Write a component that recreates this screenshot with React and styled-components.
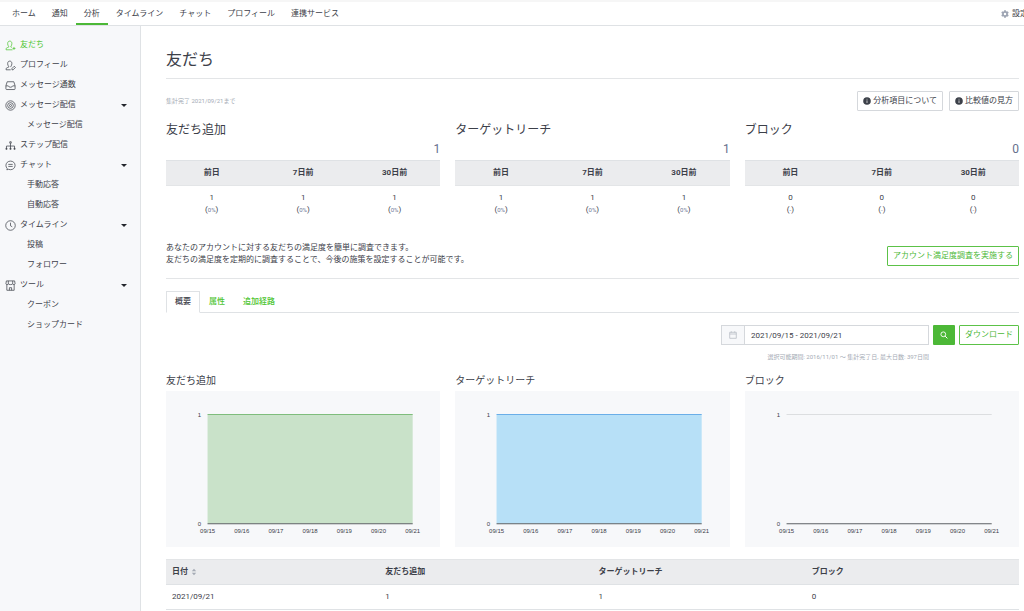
import styled, { createGlobalStyle } from "styled-components";

const navItems = [
  "ホーム",
  "通知",
  "分析",
  "タイムライン",
  "チャット",
  "プロフィール",
  "連携サービス",
];

const menuItems = [
  { label: "友だち", icon: "friends", active: true },
  { label: "プロフィール", icon: "profile" },
  { label: "メッセージ通数", icon: "inbox" },
  { label: "メッセージ配信", icon: "broadcast", children: ["メッセージ配信"] },
  { label: "ステップ配信", icon: "steps" },
  { label: "チャット", icon: "chat", children: ["手動応答", "自動応答"] },
  { label: "タイムライン", icon: "clock", children: ["投稿", "フォロワー"] },
  { label: "ツール", icon: "shop", children: ["クーポン", "ショップカード"] },
];

const periods = ["前日", "7日前", "30日前"];

const stats = [
  { title: "友だち追加", total: 1, value: 1, rate: "0%" },
  { title: "ターゲットリーチ", total: 1, value: 1, rate: "0%" },
  { title: "ブロック", total: 0, value: 0, rate: "-" },
];

const days = ["09/15", "09/16", "09/17", "09/18", "09/19", "09/20", "09/21"];

const charts = [
  { title: "友だち追加", fill: "#c9e2c9", line: "#7fbd7c" },
  { title: "ターゲットリーチ", fill: "#b7e0f7", line: "#6aaee8" },
  { title: "ブロック" },
];

const iconShapes = {
  friends: (
    <>
      <path d="M8.2 10.7H1.2V9.6C1.2 8.6 2.6 8.3 4 7.8V6.9C3.3 6.2 2.9 5.2 2.9 3.9C2.9 2.2 3.8 1.2 5.2 1.2S7.5 2.2 7.5 3.9C7.5 5.2 7.1 6.2 6.4 6.9V7.7L7.4 8.1" />
      <path d="M9.8 7.6V10.8M8.2 9.2H11.4" />
    </>
  ),
  profile: (
    <>
      <path d="M6.2 10.7H1.2V9.6C1.2 8.6 2.6 8.3 4 7.8V6.9C3.3 6.2 2.9 5.2 2.9 3.9C2.9 2.2 3.8 1.2 5.2 1.2S7.5 2.2 7.5 3.9C7.5 5.2 7.1 6.2 6.4 6.9V7.7" />
      <path d="M7.6 10.7V9.3L10.1 6.8L11.4 8.1L8.9 10.7Z" />
    </>
  ),
  inbox: (
    <>
      <path d="M1 6.2L2.4 1.9H9.6L11 6.2V9.6Q11 10.4 10.2 10.4H1.8Q1 10.4 1 9.6Z" />
      <path d="M1 6.4H3.6C4 8.4 8 8.4 8.4 6.4H11" />
    </>
  ),
  broadcast: (
    <>
      <circle cx="6" cy="6" r="5.1" />
      <circle cx="6" cy="6" r="3.1" />
      <circle cx="6" cy="6" r="1.1" />
    </>
  ),
  steps: (
    <>
      <path d="M6 3.6V9.8M1.6 9.8V6.6H10.4V9.8" />
      <path d="M5.2 1.9H6.8V3.5H5.2ZM1 9H2.2V10.2H1ZM5.4 9H6.6V10.2H5.4ZM9.8 9H11V10.2H9.8Z" />
    </>
  ),
  chat: (
    <>
      <path d="M2 10.7L2.4 9.3C1.5 8.4 1 7.2 1 5.9C1 3.2 3.2 1.2 6 1.2S11 3.2 11 5.9S8.8 10.6 6 10.6C5.2 10.6 4.4 10.4 3.8 10.2Z" />
      <path d="M3.6 4.8H8.4M3.6 7H8.4" />
    </>
  ),
  clock: (
    <>
      <circle cx="6" cy="6" r="5.2" />
      <path d="M6 2.9V6.3L7.9 7.4" />
    </>
  ),
  shop: (
    <>
      <path d="M2 5V11.2H10V5M1.5 1H10.5L11 4.2C10.8 5.3 8.6 5.3 8.4 4.2C8.2 5.3 3.8 5.3 3.6 4.2C3.4 5.3 1.2 5.3 1 4.2Z" />
      <path d="M3.6 1V4.2M8.4 1V4.2M4.8 11.2V8.4H7.2V11.2" />
    </>
  ),
};

const MenuIcon = ({ name }) => (
  <LineIcon viewBox="0 0 12 12" aria-hidden="true">
    {iconShapes[name]}
  </LineIcon>
);

const InfoIcon = () => (
  <svg width="8" height="8" viewBox="0 0 8 8" aria-hidden="true">
    <circle cx="4" cy="4" r="3.8" fill="#3c4049" />
    <path d="M4 1.8V2.6M4 3.4V6" stroke="#fff" strokeWidth="0.7" />
  </svg>
);

const GearIcon = () => (
  <svg width="8" height="8" viewBox="0 0 8 8" aria-hidden="true">
    <circle cx="4" cy="4" r="2.1" fill="none" stroke="#9ca3b2" strokeWidth="1.7" />
    <path
      d="M4 0.2V1.6M4 6.4V7.8M0.7 2.1L1.9 2.8M6.1 5.2L7.3 5.9M0.7 5.9L1.9 5.2M6.1 2.8L7.3 2.1"
      stroke="#9ca3b2"
      strokeWidth="1.8"
    />
  </svg>
);

const Chart = ({ title, fill, line }) => {
  const left = 41.5;
  const step = 34.15;
  const right = left + step * (days.length - 1);

  return (
    <ChartPanel viewBox="0 0 274 156" role="img" aria-label={title}>
      {fill && <rect x={left} y="23.5" width={right - left} height="109" fill={fill} />}
      <path d={`M${left} 23.5H${right}`} stroke={line || "#dcdee0"} />
      <path d={`M${left} 132.5H${right}`} stroke="#5c6064" />
      <text x="35" y="26" textAnchor="end">
        1
      </text>
      <text x="35" y="135" textAnchor="end">
        0
      </text>
      {days.map((day, i) => (
        <text key={day} x={left + step * i} y="142" textAnchor="middle">
          {day}
        </text>
      ))}
    </ChartPanel>
  );
};

const App = () => (
  <>
    <GlobalStyle />
    <Header>
      <Nav>
        {navItems.map((item) => (
          <NavLink href="#" key={item} $active={item === "分析"}>
            {item}
          </NavLink>
        ))}
      </Nav>
      <SettingsLink href="#">
        <GearIcon />
        設定
      </SettingsLink>
    </Header>

    <Page>
      <Sidebar>
        {menuItems.map(({ label, icon, active, children }) => (
          <div key={label}>
            <MenuLink href="#" $active={active}>
              <MenuIcon name={icon} />
              {label}
              {children && <Caret />}
            </MenuLink>
            {children &&
              children.map((child) => (
                <SubLink href="#" key={child}>
                  {child}
                </SubLink>
              ))}
          </div>
        ))}
      </Sidebar>

      <Main>
        <Title>友だち</Title>

        <InfoBar>
          <Note>集計完了 2021/09/21まで</Note>
          <ButtonGroup>
            <Button>
              <InfoIcon />
              分析項目について
            </Button>
            <Button>
              <InfoIcon />
              比較値の見方
            </Button>
          </ButtonGroup>
        </InfoBar>

        <Columns>
          {stats.map(({ title, total, value, rate }) => (
            <section key={title}>
              <StatTitle>{title}</StatTitle>
              <Total>{total}</Total>
              <StatTable>
                <thead>
                  <tr>
                    {periods.map((period) => (
                      <th key={period}>{period}</th>
                    ))}
                  </tr>
                </thead>
                <tbody>
                  <tr>
                    {periods.map((period) => (
                      <td key={period}>
                        {value}
                        <br />(<small>{rate}</small>)
                      </td>
                    ))}
                  </tr>
                </tbody>
              </StatTable>
            </section>
          ))}
        </Columns>

        <Survey>
          <p>
            あなたのアカウントに対する友だちの満足度を簡単に調査できます。
            <br />
            友だちの満足度を定期的に調査することで、今後の施策を設定することが可能です。
          </p>
          <Button $green>アカウント満足度調査を実施する</Button>
        </Survey>

        <Tabs>
          <Tab href="#" $active>
            概要
          </Tab>
          <Tab href="#">属性</Tab>
          <Tab href="#">追加経路</Tab>
        </Tabs>

        <Filter>
          <div>
            <DateField>
              <svg width="8" height="8" viewBox="0 0 8 8" aria-hidden="true">
                <path
                  d="M0.7 1.3H7.3V7.3H0.7ZM0.7 3H7.3M2.3 0.3V1.6M5.7 0.3V1.6"
                  fill="none"
                  stroke="#b9bdc5"
                  strokeWidth="0.8"
                />
              </svg>
              <input
                type="text"
                aria-label="期間"
                defaultValue="2021/09/15 - 2021/09/21"
              />
            </DateField>
            <Hint>選択可能期間: 2016/11/01 〜 集計完了日, 最大日数: 397日間</Hint>
          </div>
          <SearchButton aria-label="検索">
            <svg width="8" height="8" viewBox="0 0 8 8" aria-hidden="true">
              <circle cx="3.3" cy="3.3" r="2.4" fill="none" stroke="#fff" strokeWidth="0.9" />
              <path d="M5.1 5.1L7.4 7.4" stroke="#fff" />
            </svg>
          </SearchButton>
          <Button $green>ダウンロード</Button>
        </Filter>

        <Columns>
          {charts.map((chart) => (
            <section key={chart.title}>
              <ChartTitle>{chart.title}</ChartTitle>
              <Chart {...chart} />
            </section>
          ))}
        </Columns>

        <DataTable>
          <thead>
            <tr>
              <th>
                日付
                <SortIcon viewBox="0 0 6 8" aria-hidden="true">
                  <path d="M0.8 3.3L3 0.8L5.2 3.3ZM0.8 4.7L3 7.2L5.2 4.7Z" />
                </SortIcon>
              </th>
              <th>友だち追加</th>
              <th>ターゲットリーチ</th>
              <th>ブロック</th>
            </tr>
          </thead>
          <tbody>
            <tr>
              <td>2021/09/21</td>
              <td>1</td>
              <td>1</td>
              <td>0</td>
            </tr>
          </tbody>
        </DataTable>
      </Main>
    </Page>
  </>
);

const GlobalStyle = createGlobalStyle`
  * {
    box-sizing: border-box;
    margin: 0;
    padding: 0;
  }

  body {
    background: #fff;
    color: #3c4049;
    font: 8px/12px Roboto, "Noto Sans CJK JP", sans-serif;
    overflow: hidden;
  }

  a {
    color: inherit;
    text-decoration: none;
  }

  button,
  input {
    color: inherit;
    font: inherit;
  }

  table {
    border-collapse: collapse;
    table-layout: fixed;
    width: 100%;
  }
`;

const Header = styled.header`
  display: flex;
  justify-content: space-between;
  height: 26px;
  padding-left: 4px;
  border-top: 2px solid #f6f6f6;
  border-bottom: 1px solid #dfe2e5;
  overflow: hidden;
  white-space: nowrap;
`;

const Nav = styled.nav`
  display: flex;
`;

const NavLink = styled.a`
  display: flex;
  align-items: center;
  padding: 2px 8px 0;
  border-bottom: 2px solid ${({ $active }) => ($active ? "#4cb837" : "transparent")};
`;

const SettingsLink = styled.a`
  display: flex;
  align-items: center;
  gap: 3px;
  margin-right: -4px;
`;

const Page = styled.div`
  display: flex;
  min-height: calc(100vh - 26px);
`;

const Sidebar = styled.nav`
  flex: 0 0 141px;
  padding-top: 9px;
  background: #f7f8fa;
  border-right: 1px solid #dfe2e5;
`;

const MenuLink = styled.a`
  display: flex;
  align-items: center;
  gap: 4px;
  height: 20px;
  padding: 0 13px 0 5px;
  color: ${({ $active }) => ($active ? "#4cc42f" : "inherit")};
`;

const SubLink = styled.a`
  display: flex;
  align-items: center;
  height: 20px;
  padding-left: 27px;
`;

const LineIcon = styled.svg`
  width: 11px;
  height: 11px;
  fill: none;
  stroke: currentColor;
  stroke-width: 0.8;
`;

const Caret = styled.span`
  margin-left: auto;
  border: 3px solid transparent;
  border-top-color: #24272d;
  border-bottom: 0;
`;

const Main = styled.main`
  flex: 1;
  min-width: 0;
  padding: 22px 5px 0 25px;
`;

const Title = styled.h1`
  padding-bottom: 6px;
  border-bottom: 1px solid #e3e5e7;
  font-size: 16px;
  font-weight: 400;
  line-height: 24px;
`;

const InfoBar = styled.div`
  display: flex;
  align-items: center;
  justify-content: space-between;
  margin: 12px 0 9px;
`;

const Note = styled.p`
  color: #a5abb5;
  font-size: 6px;
`;

const ButtonGroup = styled.div`
  display: flex;
  gap: 6px;
`;

const Button = styled.button`
  display: flex;
  align-items: center;
  gap: 2px;
  height: 20px;
  padding: 0 5px;
  background: #fff;
  border: 1px solid ${({ $green }) => ($green ? "#5cc248" : "#d5d8dc")};
  border-radius: 1px;
  color: ${({ $green }) => ($green ? "#4cb837" : "inherit")};
  white-space: nowrap;
`;

const Columns = styled.div`
  display: grid;
  grid-template-columns: repeat(3, 1fr);
  gap: 15px;
`;

const StatTitle = styled.h2`
  font-size: 12px;
  font-weight: 400;
  line-height: 20px;
`;

const Total = styled.p`
  padding-bottom: 2px;
  color: #666f8c;
  font-size: 12px;
  line-height: 18px;
  text-align: right;
`;

const StatTable = styled.table`
  text-align: center;

  th {
    height: 25px;
    background: #ebecee;
    border-top: 1px solid #dfe2e5;
    border-bottom: 1px solid #e3e5e7;
  }

  td {
    padding-top: 6px;
  }

  small {
    color: #6f7a99;
    font-size: 6px;
  }
`;

const Survey = styled.div`
  display: flex;
  align-items: flex-end;
  justify-content: space-between;
  margin-top: 26px;
  padding-bottom: 12px;
  border-bottom: 1px solid #e3e5e7;
`;

const Tabs = styled.nav`
  display: flex;
  margin-top: 12px;
  border-bottom: 1px solid #dfe2e5;
`;

const Tab = styled.a`
  height: 22px;
  margin-bottom: -1px;
  padding: 0 8px;
  border: 1px solid ${({ $active }) => ($active ? "#dfe2e5" : "transparent")};
  border-bottom-color: ${({ $active }) => ($active ? "#fff" : "transparent")};
  color: ${({ $active }) => ($active ? "inherit" : "#4cc42f")};
  font-weight: 500;
  line-height: 20px;
`;

const Filter = styled.div`
  display: flex;
  justify-content: flex-end;
  gap: 4px;
  margin-top: 12px;
`;

const DateField = styled.label`
  display: flex;
  align-items: center;
  width: 208px;
  height: 20px;
  padding-left: 7px;
  background: #f7f8fa;
  border: 1px solid #d5d8dc;

  input {
    flex: 1;
    min-width: 0;
    height: 100%;
    margin-left: 7px;
    padding: 0 6px;
    background: #fff;
    border: 0;
    border-left: 1px solid #d5d8dc;
  }
`;

const Hint = styled.p`
  margin-top: 6px;
  color: #a5abb5;
  font-size: 6px;
  text-align: right;
`;

const SearchButton = styled.button`
  display: flex;
  align-items: center;
  justify-content: center;
  width: 22px;
  height: 20px;
  background: #4cb837;
  border: 0;
  border-radius: 1px;
`;

const ChartTitle = styled.h3`
  margin-top: 8px;
  font-size: 10px;
  font-weight: 400;
  line-height: 20px;
`;

const ChartPanel = styled.svg`
  display: block;
  width: 100%;
  background: #f7f8fa;

  text {
    fill: #3c4049;
    font: 6px "Liberation Sans", sans-serif;
  }
`;

const DataTable = styled.table`
  margin-top: 12px;
  text-align: left;

  th,
  td {
    height: 25px;
    padding: 0 6px;
    border-bottom: 1px solid #dfe2e5;
  }

  th {
    background: #ebecee;
    border-top: 1px solid #e3e5e7;
  }
`;

const SortIcon = styled.svg`
  width: 6px;
  height: 8px;
  margin-left: 3px;
  fill: #a5abb5;
  vertical-align: middle;
`;

export default App;
